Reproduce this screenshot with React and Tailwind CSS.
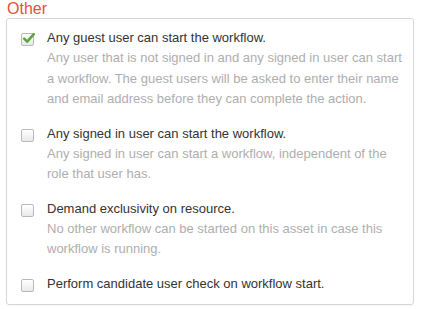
import React from "react";

const items = [
  {
    checked: true,
    title: "Any guest user can start the workflow.",
    desc: "Any user that is not signed in and any signed in user can start a workflow. The guest users will be asked to enter their name and email address before they can complete the action.",
  },
  {
    checked: false,
    title: "Any signed in user can start the workflow.",
    desc: "Any signed in user can start a workflow, independent of the role that user has.",
  },
  {
    checked: false,
    title: "Demand exclusivity on resource.",
    desc: "No other workflow can be started on this asset in case this workflow is running.",
  },
  {
    checked: false,
    title: "Perform candidate user check on workflow start.",
    desc: null,
  },
];

function Checkbox({ checked }) {
  return (
    <div className="relative mt-[5px] h-[13px] w-[13px] shrink-0 rounded-[2px] border border-[#b9b9b9] bg-gradient-to-b from-white to-[#e9e9e9]">
      {checked && (
        <svg
          className="absolute left-[0px] top-[-3px]"
          width="14"
          height="14"
          viewBox="0 0 14 14"
        >
          <path
            d="M2.2 7.6 L5.2 10.6 L11.8 3.2"
            fill="none"
            stroke="#5aa83a"
            strokeWidth="2.6"
            strokeLinecap="round"
            strokeLinejoin="round"
          />
        </svg>
      )}
    </div>
  );
}

export default function App() {
  return (
    <div
      className="w-[421px] h-[309px] bg-white pl-[6px] pr-[7px]"
      style={{ fontFamily: '"Liberation Sans", Arial, sans-serif' }}
    >
      <div className="pl-[1px] text-[16px] leading-[18px] text-[#e2503a]">Other</div>
      <div className="rounded-[3px] border border-[#d6d6d6] pl-[14px] pr-[10px] pt-[9px] pb-[10px] shadow-[0_1px_1px_rgba(0,0,0,0.04)]">
        {items.map((item, i) => (
          <div
            key={i}
            className={`flex gap-[13px] ${i < items.length - 1 ? "mb-[14px]" : ""}`}
          >
            <Checkbox checked={item.checked} />
            <div>
              <div className="text-[13px] leading-[20px] text-[#333]">{item.title}</div>
              {item.desc && (
                <div className="text-[13px] leading-[20.5px] text-[#aeaeae]">{item.desc}</div>
              )}
            </div>
          </div>
        ))}
      </div>
    </div>
  );
}
